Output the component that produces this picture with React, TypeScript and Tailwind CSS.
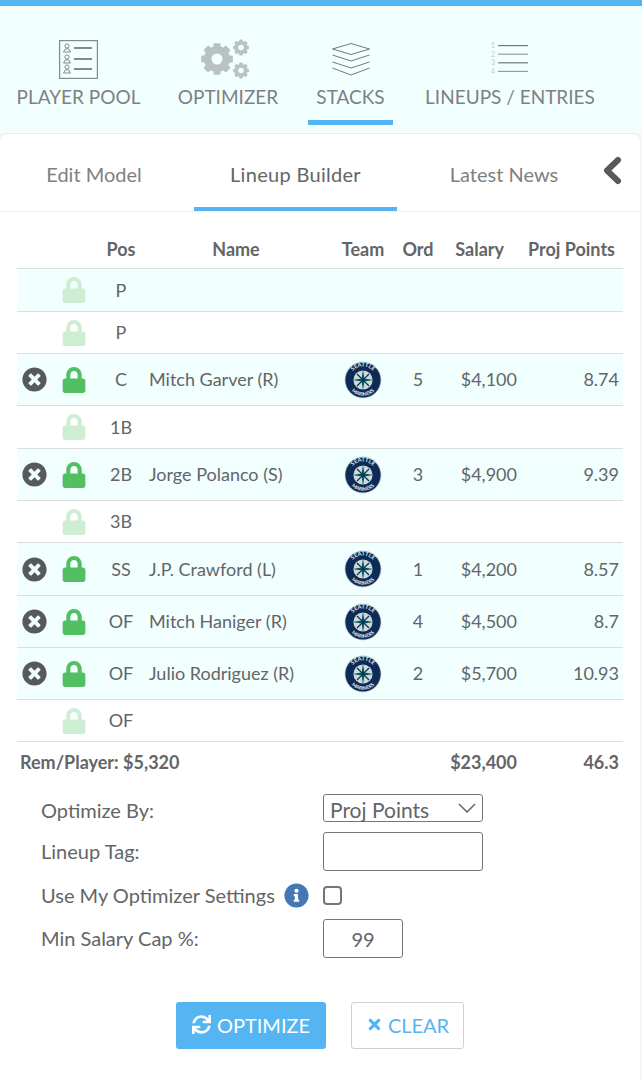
import React from "react";
import { FaInfoCircle, FaLock, FaSync, FaTimes, FaTimesCircle } from "react-icons/fa";

const PlayerPoolIcon = () => (
  <svg width="39" height="39" viewBox="0 0 39 39" fill="none" stroke="#85898a">
    <rect x="0.6" y="0.6" width="37.8" height="37.8" strokeWidth="1.2" />
    {[8, 19, 29].map((y) => (
      <g key={y}>
        <circle cx="8" cy={y - 2} r="2.1" strokeWidth="1" />
        <path d={`M4.5 ${y + 4} L6.5 ${y + 0.8} H9.5 L11.5 ${y + 4} Z`} strokeWidth="1" />
        <path d={`M15 ${y} H33`} strokeWidth="2" />
      </g>
    ))}
  </svg>
);

const Gear = ({ cx, cy, r, hole }: { cx: number; cy: number; r: number; hole: number }) => (
  <g>
    {[0, 45, 90, 135].map((a) => (
      <rect
        key={a}
        x={cx - r * 0.27}
        y={cy - r * 1.22}
        width={r * 0.54}
        height={r * 2.44}
        rx={r * 0.08}
        transform={`rotate(${a} ${cx} ${cy})`}
      />
    ))}
    <circle cx={cx} cy={cy} r={r} />
    <circle cx={cx} cy={cy} r={hole} fill="#f2ffff" />
  </g>
);

const OptimizerIcon = () => (
  <svg width="50" height="40" viewBox="0 0 50 40" fill="#b9c2c1" className="mr-[6px]">
    <Gear cx={17} cy={20} r={13} hole={5.5} />
    <Gear cx={41} cy={8.5} r={6.5} hole={2.8} />
    <Gear cx={41} cy={31.5} r={6.5} hole={2.8} />
  </svg>
);

const StacksIcon = () => (
  <svg width="38" height="33" viewBox="0 0 38 33" fill="none" stroke="#737778" strokeWidth="1">
    <path d="M19 0.5 L37.5 6 L19 11.5 L0.5 6 Z" />
    <path d="M0.5 12 L19 18 L37.5 12" />
    <path d="M0.5 19 L19 25 L37.5 19" />
    <path d="M0.5 25 L19 32 L37.5 25" />
  </svg>
);

const LineupsIcon = () => (
  <svg width="38" height="34" viewBox="0 0 38 34">
    {[1, 2, 3, 4].map((n, i) => (
      <g key={n}>
        <text x="0" y={6 + i * 8.6} fontSize="7" fill="#c3cbcb" fontFamily="Lato, sans-serif">
          {n}
        </text>
        <rect x="7" y={3 + i * 8.6} width="30" height="1.2" fill={i % 2 ? "#999d9e" : "#75797a"} />
      </g>
    ))}
  </svg>
);

const MarinersLogo = ({ id }: { id: number }) => (
  <svg width="38" height="38" viewBox="0 0 38 38" className="block">
    <circle cx="19" cy="19" r="18.5" fill="#c4ced4" />
    <circle cx="19" cy="19" r="17.6" fill="#0c2c56" />
    <defs>
      <path id={`top${id}`} d="M5.5 19 A13.5 13.5 0 0 1 32.5 19" />
      <path id={`bot${id}`} d="M3.2 19 A15.8 15.8 0 0 0 34.8 19" />
    </defs>
    <text fontSize="5.6" fontWeight="700" fill="#e4eaee" fontFamily="Lato, sans-serif" textAnchor="middle">
      <textPath href={`#top${id}`} startOffset="50%">
        SEATTLE
      </textPath>
    </text>
    <text fontSize="5" fontWeight="700" fill="#e4eaee" fontFamily="Lato, sans-serif" textAnchor="middle">
      <textPath href={`#bot${id}`} startOffset="50%">
        MARINERS
      </textPath>
    </text>
    <circle cx="19" cy="19" r="9.6" fill="#cfd9dd" />
    <path d="M19 8.5 L20.4 17.6 L29.5 19 L20.4 20.4 L19 29.5 L17.6 20.4 L8.5 19 L17.6 17.6 Z" fill="#005c5c" />
    <path d="M13 13 L19 19 L25 13 M13 25 L19 19 L25 25" stroke="#0c2c56" strokeWidth="1.2" fill="none" />
  </svg>
);

type Row = {
  pos: string;
  name?: string;
  ord?: number;
  salary?: string;
  pts?: string;
  height: string;
  tint?: boolean;
};

const ROWS: Row[] = [
  { pos: "P", height: "h-[43px]", tint: true },
  { pos: "P", height: "h-[42px]" },
  { pos: "C", name: "Mitch Garver (R)", ord: 5, salary: "$4,100", pts: "8.74", height: "h-[52px]", tint: true },
  { pos: "1B", height: "h-[43px]" },
  { pos: "2B", name: "Jorge Polanco (S)", ord: 3, salary: "$4,900", pts: "9.39", height: "h-[52px]", tint: true },
  { pos: "3B", height: "h-[42px]" },
  { pos: "SS", name: "J.P. Crawford (L)", ord: 1, salary: "$4,200", pts: "8.57", height: "h-[53px]", tint: true },
  { pos: "OF", name: "Mitch Haniger (R)", ord: 4, salary: "$4,500", pts: "8.7", height: "h-[52px]", tint: true },
  { pos: "OF", name: "Julio Rodriguez (R)", ord: 2, salary: "$5,700", pts: "10.93", height: "h-[52px]", tint: true },
  { pos: "OF", height: "h-[42px]" },
];

const LineupRow = ({ row, id }: { row: Row; id: number }) => {
  return (
    <div className={`flex items-center border-b border-[#dcdfe0] text-[18px] ${row.height} ${row.tint ? "bg-[#f2ffff]" : ""}`}>
      <div className="flex w-[34px] justify-center text-[#58595b]">
        {row.name && <FaTimesCircle size={25} />}
      </div>
      <div className="flex w-[45px] justify-center">
        <FaLock size={26} className={row.name ? "text-[#52bf62]" : "text-[#cdeed3]"} />
      </div>
      <div className="w-[50px] text-center">{row.pos}</div>
      <div className="w-[195px] pl-[3px]">{row.name}</div>
      <div className="flex w-[44px] justify-center">{row.name && <MarinersLogo id={id} />}</div>
      <div className="w-[66px] text-center">{row.ord}</div>
      <div className="w-[66px] whitespace-nowrap text-right">{row.salary}</div>
      <div className="w-[102px] text-right">{row.pts}</div>
    </div>
  );
};

const NavItem = ({ label, width, active, icon }: { label: string; width: string; active?: boolean; icon: React.ReactNode }) => (
  <div className={`flex h-[89px] flex-col items-center ${width} ${active ? "border-b-[5px] border-[#55b5f2]" : ""}`}>
    <div className="flex h-[46px] items-center justify-center">{icon}</div>
    <div className="mt-[2px] whitespace-nowrap text-[19px] leading-[26px] text-[#7d8182]">{label}</div>
  </div>
);

export default function App() {
  return (
    <div className="min-h-[1080px] w-[642px] overflow-hidden bg-[#f5f6f6] font-['Lato','Liberation_Sans',sans-serif] text-[#636567]">
      <div className="h-[6px] bg-[#55b5f2]" />
      <nav className="flex h-[127px] gap-[22px] bg-[#f2ffff] pl-[9px] pt-[30px]">
        <NavItem label="PLAYER POOL" width="w-[139px]" icon={<PlayerPoolIcon />} />
        <NavItem label="OPTIMIZER" width="w-[116px]" icon={<OptimizerIcon />} />
        <NavItem label="STACKS" width="w-[85px]" active icon={<StacksIcon />} />
        <NavItem label="LINEUPS / ENTRIES" width="w-[190px]" icon={<LineupsIcon />} />
      </nav>

      <div className="h-[947px] w-[640px] rounded-t-lg border-t border-[#e8eaea] bg-white">
        <div className="relative flex h-[78px] border-b border-[#eef0f0] text-[20px]">
          <div className="flex h-[77px] w-[194px] items-center justify-center pr-[6px] pt-[2px] text-[#7d8182]">Edit Model</div>
          <div className="flex h-[77px] w-[203px] items-center justify-center border-b-[4px] border-[#55b5f2] pt-[6px] tracking-[0.3px] text-[#636567]">
            Lineup Builder
          </div>
          <div className="flex h-[77px] w-[214px] items-center justify-center pt-[2px] text-[#7d8182]">Latest News</div>
          <svg
            width="20"
            height="30"
            viewBox="0 0 20 30"
            fill="none"
            stroke="#58595b"
            strokeWidth="6"
            strokeLinecap="round"
            strokeLinejoin="round"
            className="absolute left-[603px] top-[22px]"
          >
            <path d="M15 4 L4 14.5 L15 25" />
          </svg>
        </div>

        <div className="mx-[17px] mt-[16px] w-[606px]">
          <div className="flex h-[41px] items-center border-b border-[#dcdfe0] pt-[2px] text-[18px] font-bold">
            <div className="w-[79px]" />
            <div className="w-[50px] text-center">Pos</div>
            <div className="w-[195px] pr-[18px] pl-[3px] text-center">Name</div>
            <div className="w-[44px] whitespace-nowrap text-center">Team</div>
            <div className="w-[66px] text-center">Ord</div>
            <div className="flex w-[53px] justify-end">Salary</div>
            <div className="w-[111px] whitespace-nowrap text-right">Proj Points</div>
          </div>
          {ROWS.map((row, i) => (
            <LineupRow key={i} row={row} id={i} />
          ))}
          <div className="flex h-[41px] items-center text-[18px] font-bold">
            <div className="w-[410px] pl-[3px]">Rem/Player: $5,320</div>
            <div className="w-[90px] text-right">$23,400</div>
            <div className="w-[102px] text-right">46.3</div>
          </div>
        </div>

        <div className="mt-[12px] grid grid-cols-[282px_auto] items-center justify-start pl-[41px] text-[20px]">
          <div className="h-[37px] leading-[31px]">Optimize By:</div>
          <div className="h-[37px]">
            <div className="-mt-[1px] flex h-[28px] w-[160px] items-center justify-between rounded-[3px] border border-[#767676] pl-[6px] pr-[6px]">
              <span className="pt-[3px] text-[21px] leading-[26px]">Proj Points</span>
              <svg width="18" height="10" viewBox="0 0 18 10" fill="none" stroke="#636567" strokeWidth="1.5">
                <path d="M1 1 L9 9 L17 1" />
              </svg>
            </div>
          </div>
          <div className="h-[39px] leading-[39px]">Lineup Tag:</div>
          <div className="h-[39px] w-[160px] rounded-[3px] border border-[#767676]" />
          <div className="flex h-[48px] items-center">
            Use My Optimizer Settings
            <FaInfoCircle size={25} className="ml-[9px] text-[#4478b4]" />
          </div>
          <div className="flex h-[48px] items-center">
            <div className="h-[19px] w-[19px] rounded-[4px] border-2 border-[#767676]" />
          </div>
          <div className="h-[39px] leading-[39px]">Min Salary Cap %:</div>
          <div className="flex h-[39px] w-[80px] items-center justify-center rounded-[3px] border border-[#767676]">99</div>
        </div>

        <div className="mt-[44px] flex gap-[25px] pl-[176px] text-[20px]">
          <button className="flex h-[47px] w-[150px] items-center justify-center gap-[6px] rounded-[3px] bg-[#55b5f2] pb-[2px] text-white">
            <FaSync size={19} />
            OPTIMIZE
          </button>
          <button className="flex h-[47px] w-[113px] items-center justify-center gap-[5px] rounded-[3px] border border-[#cfd2d3] pb-[2px] text-[#55b5f2]">
            <FaTimes size={17} />
            CLEAR
          </button>
        </div>
      </div>
    </div>
  );
}
